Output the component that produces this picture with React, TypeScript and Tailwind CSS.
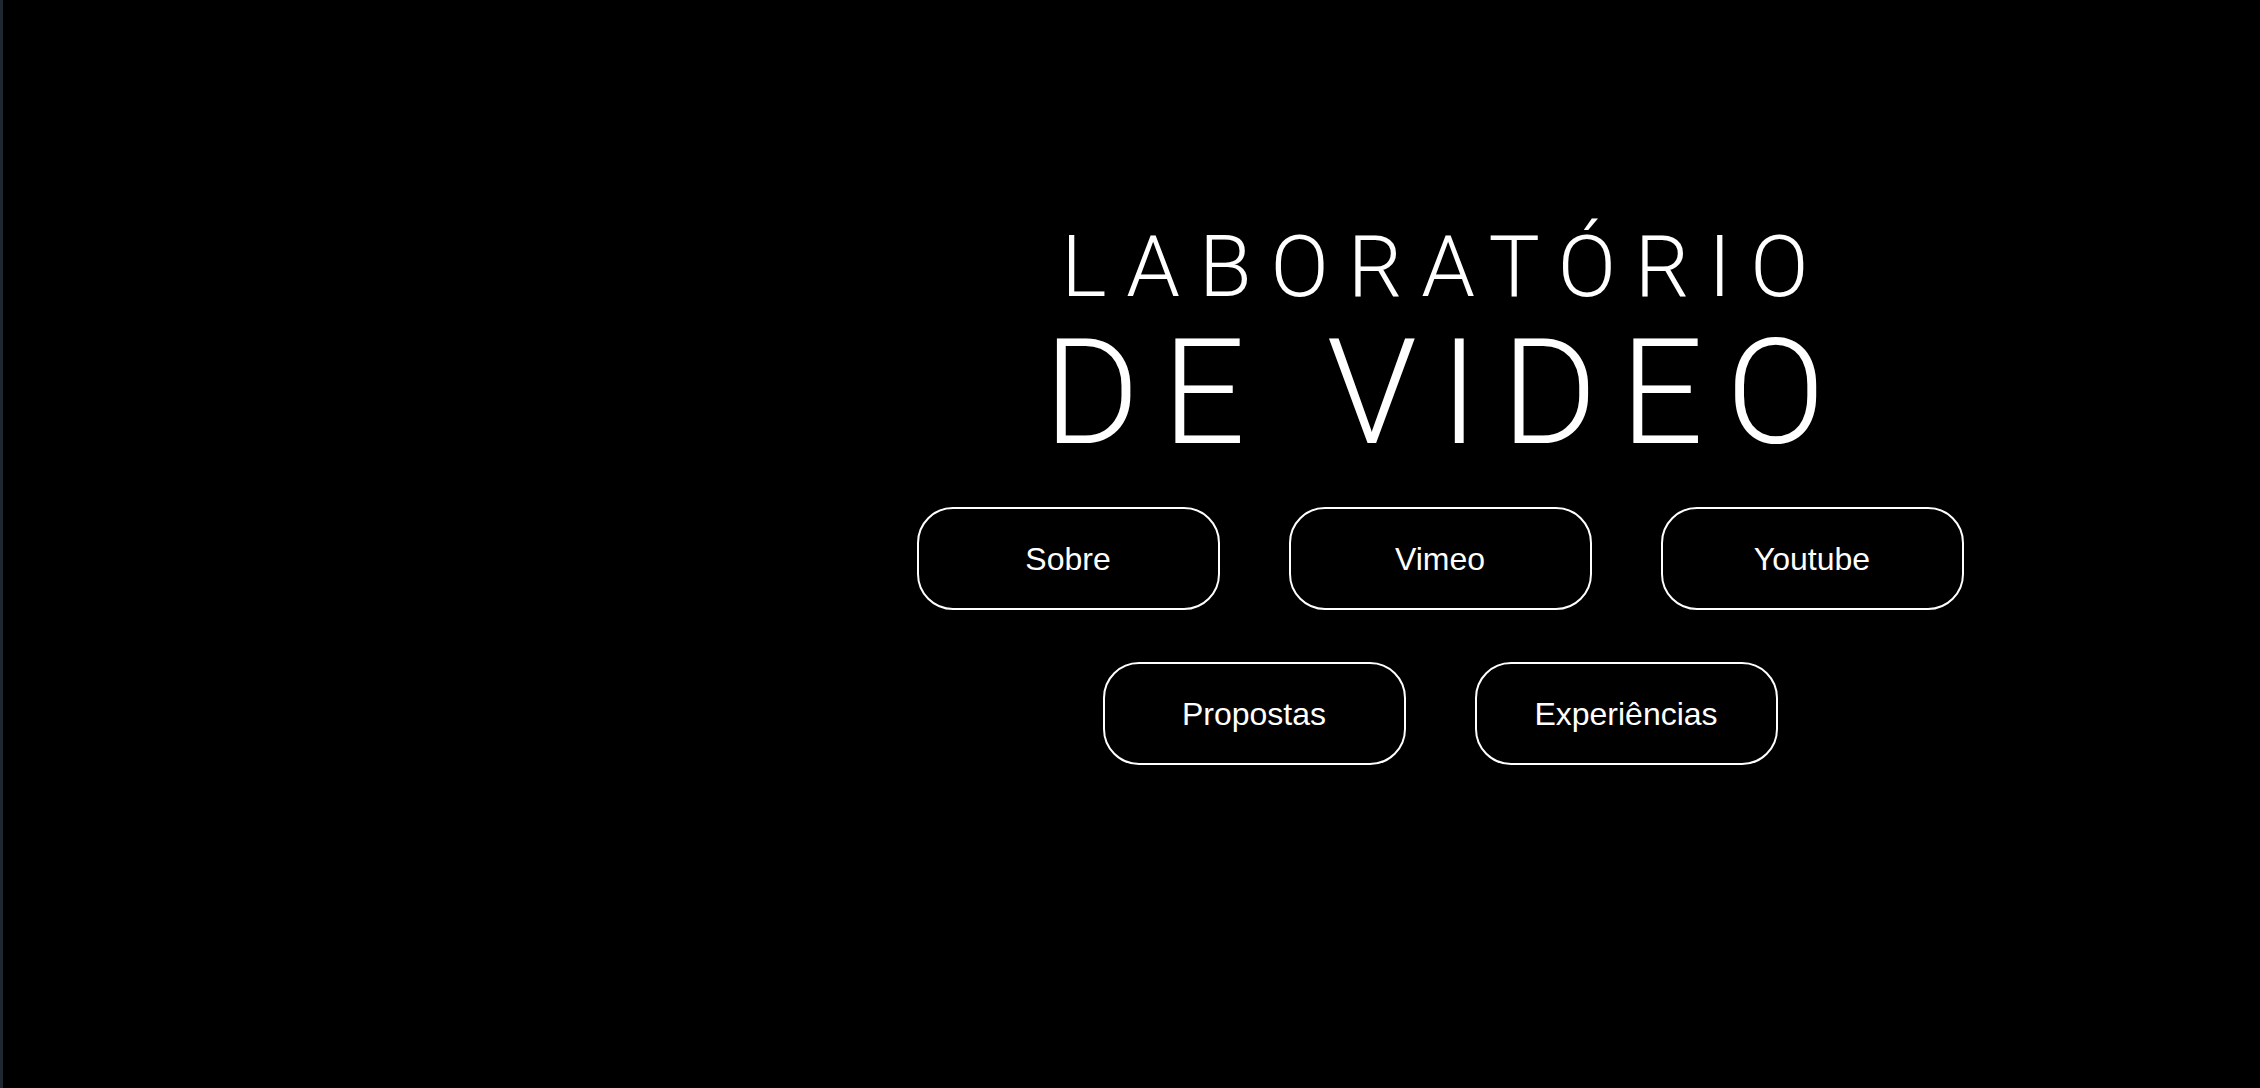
const links = [
  ["Sobre", "Vimeo", "Youtube"],
  ["Propostas", "Experiências"],
];

function NavButton({ label }: { label: string }) {
  return (
    <a
      href="#"
      className="flex h-[103px] w-[303px] items-center justify-center rounded-[36px] border-2 border-white text-[32px] text-white"
      style={{ fontFamily: '"Liberation Sans", Arial, sans-serif' }}
    >
      {label}
    </a>
  );
}

export default function App() {
  return (
    <div className="flex h-[1088px] w-full bg-black">
      <div className="w-[3px] shrink-0 bg-[#1f2730]" />
      <div className="w-[617px] shrink-0" />

      <main className="flex flex-1 flex-col items-center pt-[224px]">
        <h1
          className="flex flex-col items-center font-light text-white"
          style={{ fontFamily: 'Roboto, "Liberation Sans", sans-serif' }}
        >
          <span className="pl-[0.1em] text-[86px] leading-none tracking-[0.22em]">LABORATÓRIO</span>
          <span className="mt-[11px] pl-[0.08em] text-[146px] leading-none tracking-[0.157em]">DE VIDEO</span>
        </h1>

        <nav className="mt-[40px] flex flex-col items-center gap-[52px]">
          {links.map((row, i) => (
            <div key={i} className="flex gap-[69px]">
              {row.map((label) => (
                <NavButton key={label} label={label} />
              ))}
            </div>
          ))}
        </nav>
      </main>
    </div>
  );
}
